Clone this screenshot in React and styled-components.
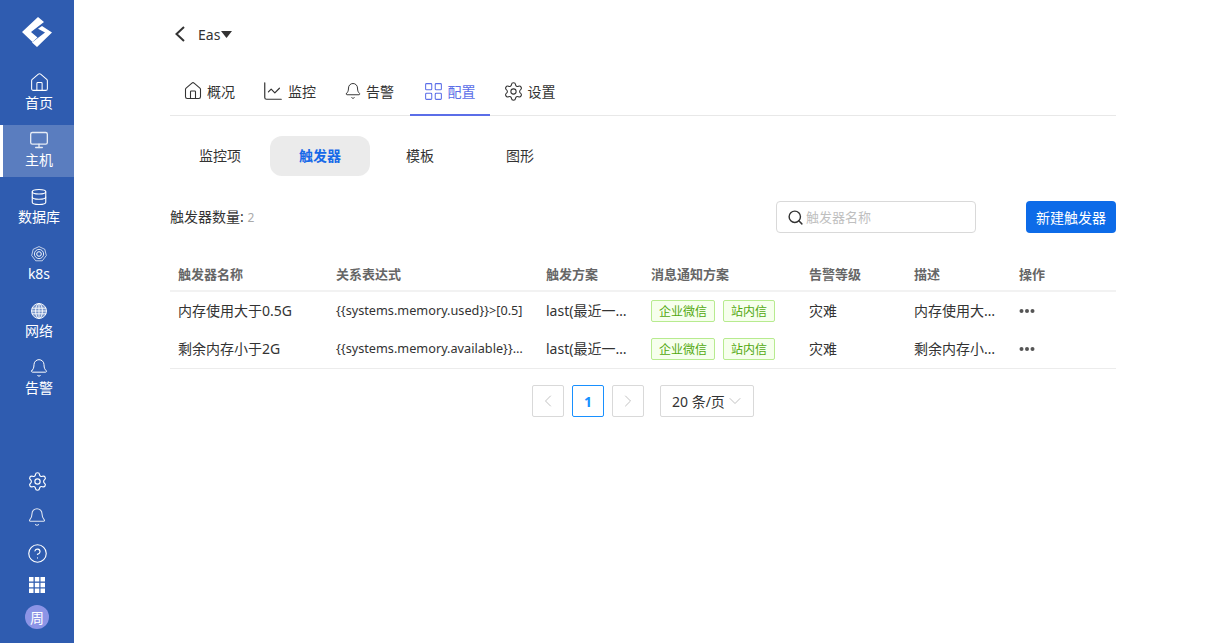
import styled, { createGlobalStyle } from "styled-components";
import {
  Home,
  Monitor,
  Database,
  Bell,
  Settings,
  CircleHelp,
  ChevronLeft,
  ChevronRight,
  ChevronDown,
  Search,
  ChartLine,
  LayoutGrid,
} from "lucide-react";

const GlobalStyle = createGlobalStyle`
  html, body {
    margin: 0;
    padding: 0;
    height: 100%;
    background: #fff;
  }
  body {
    font-family: "Noto Sans", "Noto Sans CJK SC", sans-serif;
    font-size: 14px;
    color: #333;
  }
  * { box-sizing: border-box; }
`;

const Logo = () => (
  <svg width="32" height="32" viewBox="0 0 32 32" fill="#fff">
    <path d="M1 16 L17 1 L23 6 L10 16 L16.500 21.500 L11.500 26 Z" />
    <path d="M21 10 L31 16.500 L16 31 L11 26.500 L24 16.500 L17 12.800 Z" />
  </svg>
);

const K8sIcon = () => (
  <svg width="16" height="16" viewBox="0 0 16 16" fill="none" stroke="#fff" strokeWidth="1">
    <path d="M8 .6 L13.800 3.300 L15.300 9.500 L11.300 14.800 L4.700 14.800 L.7 9.500 L2.200 3.300 Z" opacity=".7" />
    <circle cx="8" cy="8" r="4.600" opacity=".85" />
    <circle cx="8" cy="8" r="2.300" />
  </svg>
);

const GlobeIcon = () => (
  <svg width="16" height="16" viewBox="0 0 16 16" fill="none" stroke="#fff" strokeWidth=".9">
    <circle cx="8" cy="8" r="7.500" fill="rgba(255,255,255,.35)" />
    <ellipse cx="8" cy="8" rx="3.400" ry="7.500" />
    <path d="M8 .5 V15.500 M.8 5.200 H15.200 M.5 8 H15.500 M.8 10.800 H15.200" />
  </svg>
);

const GridIcon = () => (
  <svg width="16" height="16" viewBox="0 0 16 16" fill="#fff">
    <rect x="0" y="0" width="4.500" height="4.500" />
    <rect x="5.800" y="0" width="4.500" height="4.500" />
    <rect x="11.500" y="0" width="4.500" height="4.500" />
    <rect x="0" y="5.800" width="4.500" height="4.500" />
    <rect x="5.800" y="5.800" width="4.500" height="4.500" />
    <rect x="11.500" y="5.800" width="4.500" height="4.500" />
    <rect x="0" y="11.500" width="4.500" height="4.500" />
    <rect x="5.800" y="11.500" width="4.500" height="4.500" />
    <rect x="11.500" y="11.500" width="4.500" height="4.500" />
  </svg>
);

const BackIcon = () => (
  <svg width="22" height="22" viewBox="0 0 22 22" fill="none" stroke="#333" strokeWidth="2">
    <polyline points="14,4 6.500,11 14,18" />
  </svg>
);

const Caret = () => (
  <svg width="11" height="7" viewBox="0 0 11 7">
    <path d="M0 0 H11 L5.500 7 Z" fill="#333" />
  </svg>
);

const DotsIcon = () => (
  <Dots width="16" height="6" viewBox="0 0 16 6" fill="#555">
    <circle cx="2.500" cy="3" r="2" />
    <circle cx="8" cy="3" r="2" />
    <circle cx="13.500" cy="3" r="2" />
  </Dots>
);

const navItems = [
  { label: "首页", icon: <Home size={21} strokeWidth={1.2} /> },
  { label: "主机", icon: <Monitor size={20} strokeWidth={1.6} opacity={0.85} />, active: true },
  { label: "数据库", icon: <Database size={18} strokeWidth={1.5} /> },
  { label: "k8s", icon: <K8sIcon /> },
  { label: "网络", icon: <GlobeIcon /> },
  { label: "告警", icon: <Bell size={20} strokeWidth={1.2} /> },
];

const tabs = [
  { label: "概况", icon: <Home size={20} strokeWidth={1.3} /> },
  { label: "监控", icon: <ChartLine size={22} strokeWidth={1.3} /> },
  { label: "告警", icon: <Bell size={18} strokeWidth={1.3} /> },
  { label: "配置", icon: <LayoutGrid size={21} strokeWidth={1.2} />, active: true },
  { label: "设置", icon: <Settings size={21} strokeWidth={1.2} /> },
];

const subTabs = [
  { label: "监控项" },
  { label: "触发器", active: true },
  { label: "模板" },
  { label: "图形" },
];

const columns = [
  { label: "触发器名称", width: 158 },
  { label: "关系表达式", width: 210 },
  { label: "触发方案", width: 105 },
  { label: "消息通知方案", width: 158 },
  { label: "告警等级", width: 105 },
  { label: "描述", width: 105 },
  { label: "操作", width: 105 },
];

const rows = [
  {
    name: "内存使用大于0.5G",
    expr: "{{systems.memory.used}}>[0.5]",
    plan: "last(最近一次值)",
    level: "灾难",
    desc: "内存使用大于0.5G",
  },
  {
    name: "剩余内存小于2G",
    expr: "{{systems.memory.available}}<[2]",
    plan: "last(最近一次值)",
    level: "灾难",
    desc: "剩余内存小于2G",
  },
];

const App = () => {
  return (
    <>
      <GlobalStyle />
      <Layout>
        <Sidebar>
          <LogoBox>
            <Logo />
          </LogoBox>
          <NavList>
            {navItems.map((item) => (
              <NavItem key={item.label} $active={item.active}>
                <NavIcon>{item.icon}</NavIcon>
                <NavLabel>{item.label}</NavLabel>
              </NavItem>
            ))}
          </NavList>
          <SideBottom>
            <SideIcon><Settings size={21} strokeWidth={1.3} /></SideIcon>
            <SideIcon><Bell size={20} strokeWidth={1.3} opacity={0.85} /></SideIcon>
            <SideIcon><CircleHelp size={21} strokeWidth={1.3} /></SideIcon>
            <GridBox><GridIcon /></GridBox>
            <Avatar>周</Avatar>
          </SideBottom>
        </Sidebar>
        <Main>
          <Breadcrumb>
            <BackIcon />
            <HostName>Eas</HostName>
            <Caret />
          </Breadcrumb>
          <TabBar>
            {tabs.map((tab) => (
              <Tab key={tab.label} $active={tab.active}>
                {tab.icon}
                <span>{tab.label}</span>
              </Tab>
            ))}
          </TabBar>
          <SubTabBar>
            {subTabs.map((tab) => (
              <SubTab key={tab.label} $active={tab.active}>{tab.label}</SubTab>
            ))}
          </SubTabBar>
          <Toolbar>
            <Count>触发器数量: <CountNum>2</CountNum></Count>
            <SearchBox>
              <Search size={17} strokeWidth={2} color="#333" />
              <SearchInput placeholder="触发器名称" />
            </SearchBox>
            <PrimaryBtn>新建触发器</PrimaryBtn>
          </Toolbar>
          <Table>
            <colgroup>
              {columns.map((col) => (
                <col key={col.label} style={{ width: col.width }} />
              ))}
            </colgroup>
            <thead>
              <tr>
                {columns.map((col) => (
                  <Th key={col.label}>{col.label}</Th>
                ))}
              </tr>
            </thead>
            <tbody>
              {rows.map((row, i) => {
                const last = i === rows.length - 1;
                return (
                  <tr key={row.name}>
                    <Td $last={last}>{row.name}</Td>
                    <ExprTd $last={last}>{row.expr}</ExprTd>
                    <Td $last={last}>{row.plan}</Td>
                    <Td $last={last}>
                      <TagRow>
                        <Tag>企业微信</Tag>
                        <Tag>站内信</Tag>
                      </TagRow>
                    </Td>
                    <Td $last={last}>{row.level}</Td>
                    <Td $last={last}>{row.desc}</Td>
                    <Td $last={last}><DotsIcon /></Td>
                  </tr>
                );
              })}
            </tbody>
          </Table>
          <Pagination>
            <PageBtn><ChevronLeft size={20} strokeWidth={1.1} /></PageBtn>
            <PageBtn $active>1</PageBtn>
            <PageBtn><ChevronRight size={20} strokeWidth={1.1} /></PageBtn>
            <PageSize>
              <span>20 条/页</span>
              <ChevronDown size={20} strokeWidth={1.1} color="#bbb" />
            </PageSize>
          </Pagination>
        </Main>
      </Layout>
    </>
  );
};

export default App;

const Layout = styled.div`
  display: flex;
  height: 100vh;
  overflow: hidden;
`;

const Sidebar = styled.aside`
  width: 74px;
  flex-shrink: 0;
  background: #2f5cb0;
  color: #fff;
  display: flex;
  flex-direction: column;
`;

const LogoBox = styled.div`
  height: 68px;
  display: flex;
  align-items: center;
  justify-content: center;
  padding-bottom: 4px;
`;

const NavList = styled.nav`
  display: flex;
  flex-direction: column;
  gap: 5px;
`;

const NavItem = styled.div`
  height: 52px;
  display: flex;
  flex-direction: column;
  align-items: center;
  justify-content: center;
  padding: 0 0 3px 1px;
  border-left: 3px solid ${(p) => (p.$active ? "#fff" : "transparent")};
  background: ${(p) => (p.$active ? "#5a7dbf" : "transparent")};
`;

const NavIcon = styled.div`
  height: 20px;
  display: flex;
  align-items: center;
  justify-content: center;
`;

const NavLabel = styled.span`
  font-size: 14px;
  line-height: 20px;
  white-space: nowrap;
`;

const SideBottom = styled.div`
  margin-top: auto;
  display: flex;
  flex-direction: column;
  align-items: center;
  padding-bottom: 14px;
`;

const SideIcon = styled.div`
  height: 36px;
  width: 100%;
  display: flex;
  align-items: center;
  justify-content: center;
`;

const GridBox = styled.div`
  height: 28px;
  display: flex;
  align-items: center;
`;

const Avatar = styled.div`
  width: 24px;
  height: 24px;
  margin-top: 6px;
  border-radius: 50%;
  background: #8c94e6;
  font-size: 14px;
  display: flex;
  align-items: center;
  justify-content: center;
`;

const Main = styled.main`
  width: 946px;
  margin-left: 96px;
`;

const Breadcrumb = styled.div`
  height: 68px;
  display: flex;
  align-items: center;
  color: #333;
`;

const HostName = styled.span`
  font-size: 14px;
  margin-left: 6px;
  margin-right: 1px;
`;

const TabBar = styled.div`
  height: 48px;
  display: flex;
  border-bottom: 1px solid #e8e8e8;
`;

const Tab = styled.div`
  width: 80px;
  height: 48px;
  padding-right: 2px;
  display: flex;
  align-items: center;
  justify-content: center;
  gap: 4px;
  font-size: 14px;
  color: ${(p) => (p.$active ? "#5b6ee8" : "#333")};
  border-bottom: 2px solid ${(p) => (p.$active ? "#5b6ee8" : "transparent")};
`;

const SubTabBar = styled.div`
  display: flex;
  margin-top: 20px;
`;

const SubTab = styled.div`
  width: 100px;
  height: 40px;
  padding-bottom: 2px;
  display: flex;
  align-items: center;
  justify-content: center;
  font-size: 14px;
  border-radius: 12px;
  font-weight: ${(p) => (p.$active ? 700 : 400)};
  color: ${(p) => (p.$active ? "#1769e8" : "#333")};
  background: ${(p) => (p.$active ? "#ebebeb" : "transparent")};
`;

const Toolbar = styled.div`
  display: flex;
  align-items: center;
  margin-top: 25px;
  height: 32px;
`;

const Count = styled.div`
  font-size: 14px;
  color: #333;
  margin-right: auto;
  padding-bottom: 2px;
`;

const CountNum = styled.span`
  color: #aaa;
  font-size: 12px;
`;

const SearchBox = styled.label`
  width: 200px;
  height: 32px;
  display: flex;
  align-items: center;
  gap: 2px;
  padding: 0 10px;
  border: 1px solid #d9d9d9;
  border-radius: 4px;
`;

const SearchInput = styled.input`
  flex: 1;
  min-width: 0;
  border: none;
  outline: none;
  padding: 0;
  font-family: inherit;
  font-size: 13px;
  &::placeholder { color: #bfbfbf; }
`;

const PrimaryBtn = styled.button`
  width: 90px;
  height: 32px;
  margin-left: 50px;
  padding: 0;
  border: none;
  border-radius: 4px;
  background: #0d6be8;
  color: #fff;
  font-family: inherit;
  font-size: 14px;
`;

const Table = styled.table`
  width: 946px;
  table-layout: fixed;
  border-collapse: separate;
  border-spacing: 0;
  margin-top: 26px;
`;

const Th = styled.th`
  height: 33px;
  padding: 0 8px 2px;
  text-align: left;
  font-size: 13px;
  font-weight: 700;
  color: #666;
  border-bottom: 2px solid #f2f2f2;
`;

const Td = styled.td`
  height: ${(p) => (p.$last ? "39px" : "38px")};
  padding: 0 8px 2px;
  font-size: 14px;
  color: #333;
  white-space: nowrap;
  overflow: hidden;
  text-overflow: ellipsis;
  border-bottom: ${(p) => (p.$last ? "1px solid #ececec" : "none")};
`;

const ExprTd = styled(Td)`
  font-size: 12.7px;
`;

const Dots = styled.svg`
  display: block;
  margin-top: 2px;
`;

const TagRow = styled.div`
  display: flex;
  gap: 8px;
  margin-top: 2px;
`;

const Tag = styled.span`
  height: 22px;
  padding: 0 7px;
  display: flex;
  align-items: center;
  font-size: 12px;
  color: #52a80f;
  background: #f6ffed;
  border: 1px solid #b7eb8f;
  border-radius: 2px;
`;

const Pagination = styled.div`
  display: flex;
  justify-content: center;
  margin-top: 16px;
  gap: 8px;
`;

const PageBtn = styled.div`
  width: 32px;
  height: 32px;
  display: flex;
  align-items: center;
  justify-content: center;
  border-radius: 2px;
  font-size: 14px;
  font-weight: ${(p) => (p.$active ? 700 : 400)};
  color: ${(p) => (p.$active ? "#1890ff" : "#bbb")};
  border: 1px solid ${(p) => (p.$active ? "#1890ff" : "#d9d9d9")};
`;

const PageSize = styled.div`
  width: 94px;
  height: 32px;
  margin-left: 8px;
  padding: 0 10px 0 11px;
  display: flex;
  align-items: center;
  justify-content: space-between;
  font-size: 14px;
  color: #333;
  white-space: nowrap;
  border: 1px solid #d9d9d9;
  border-radius: 2px;
  svg { flex-shrink: 0; }
`;
